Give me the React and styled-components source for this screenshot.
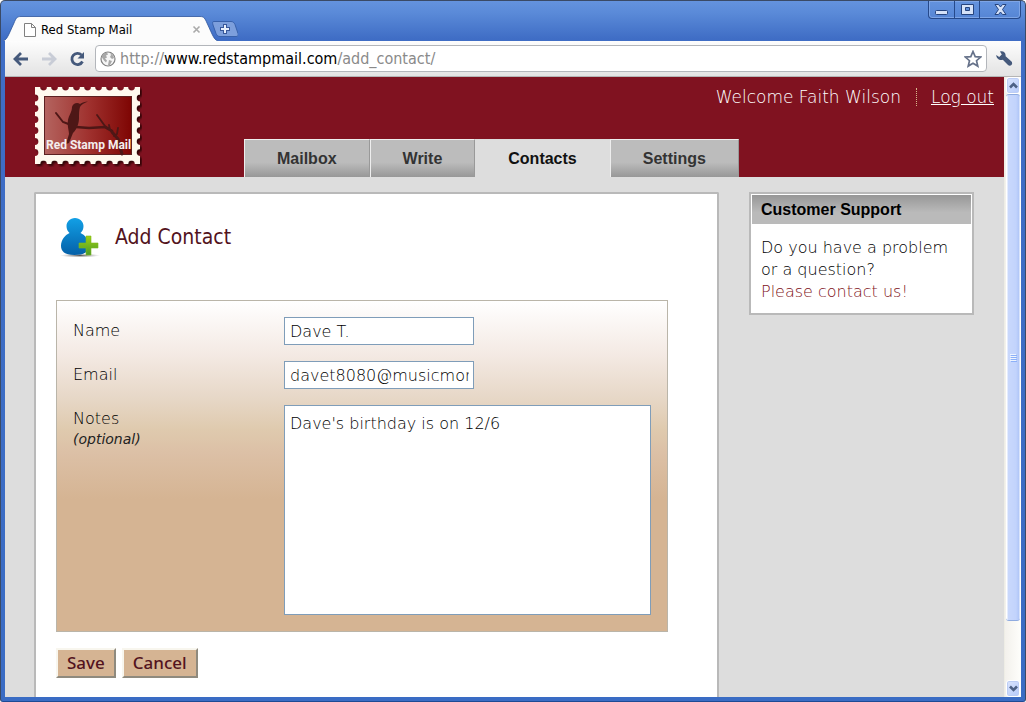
import React from "react";
import styled, { createGlobalStyle } from "styled-components";

const sans = `"DejaVu Sans", Verdana, sans-serif`;
const narrow = `"DejaVu Sans Condensed", Tahoma, sans-serif`;
const arial = `"Liberation Sans", Arial, sans-serif`;

const GlobalStyle = createGlobalStyle`
  *, *::before, *::after { box-sizing: border-box; }
  body { margin: 0; font: 200 16px/22px ${sans}; color: #000; }
  h1, h2, p { margin: 0; font-weight: inherit; }
  button { padding: 0; border: 0; background: none; font: inherit; color: inherit; }
`;

const Window = styled.div`
  height: 100vh;
  display: flex;
  flex-direction: column;
  overflow: hidden;
  padding: 0 4px 4px;
  border: 1px solid #3a4a66;
  border-bottom-color: #1d4a94;
  border-radius: 5px 5px 3px 3px;
  background: linear-gradient(#6493de 0, #5a8ad8 12px, #3f6dc5 38px, #3a6cc4 100%);
`;

const TitleBar = styled.div`
  flex: none;
  display: flex;
  align-items: flex-end;
  height: 40px;
`;

const TabShape = styled.div`
  position: relative;
  display: flex;
  align-items: center;
  gap: 4px;
  width: 213px;
  height: 25px;
  padding: 2px 17px 0 18px;
  font: 13px/16px ${narrow};
`;

const TabBack = styled.svg`
  position: absolute;
  left: -2px;
  top: 0;
`;

const TabTitle = styled.span`
  position: relative;
  flex: 1;
`;

const TabIcon = styled.svg`
  position: relative;
  flex: none;
`;

const IconButton = styled.button`
  position: relative;
  flex: none;
  display: flex;
  align-items: center;
  justify-content: center;
  width: ${(p) => p.$w || 16}px;
  height: ${(p) => p.$h || 16}px;
`;

const NewTab = styled(IconButton)`
  margin: 0 0 4px -6px;
`;

const WindowButtons = styled.div`
  display: flex;
  align-self: flex-start;
  margin-left: auto;
  border: 1px solid #26498a;
  border-top: 0;
  border-radius: 0 0 4px 4px;
  box-shadow: inset 0 0 0 1px #7ea5e6;
`;

const WindowButton = styled(IconButton)`
  & + & { border-left: 1px solid #26498a; }
`;

const Toolbar = styled.div`
  flex: none;
  display: flex;
  align-items: center;
  gap: 8px;
  height: 36px;
  padding: 0 8px;
  border-bottom: 1px solid #b5b5b5;
  background: linear-gradient(#fdfdfd, #e3e3e3);
`;

const NavButtons = styled.div`
  display: flex;
  gap: 12px;
  padding-right: 2px;
`;

const AddressBar = styled.div`
  flex: 1;
  display: flex;
  align-items: center;
  gap: 4px;
  height: 27px;
  padding: 0 4px;
  border: 1px solid #b3b6bb;
  border-radius: 4px;
  background: #fff;
  font: 16px/20px ${narrow};
  color: #8a8a8a;
`;

const Url = styled.span`
  flex: 1;
  b { font-weight: 400; color: #000; }
`;

const Viewport = styled.div`
  flex: 1;
  min-height: 0;
  display: flex;
`;

const Page = styled.div`
  flex: 1;
  min-width: 0;
  display: flex;
  flex-direction: column;
  overflow: hidden;
  background: #ddd;
`;

const Header = styled.header`
  flex: none;
  display: flex;
  gap: 102px;
  height: 100px;
  padding: 9px 10px 0 29px;
  background: #801220;
`;

const HeaderRight = styled.div`
  flex: 1;
  display: flex;
  flex-direction: column;
  justify-content: space-between;
`;

const UserBar = styled.div`
  align-self: flex-end;
  display: flex;
  align-items: center;
  color: #fff;
  font-size: 17px;
  a { color: #fff; padding-left: 14px; }
  span { padding-right: 15px; border-right: 1px dotted #d8b98c; line-height: 18px; }
`;

const Nav = styled.nav`
  display: flex;
`;

const NavTab = styled.a`
  height: 38px;
  padding: 0 32px;
  border: 1px solid ${(p) => (p.$active ? "#ddd" : "#eee")};
  border-right-color: ${(p) => (p.$active ? "#ddd" : "#999")};
  border-bottom: 0;
  background: ${(p) => (p.$active ? "#ddd" : "linear-gradient(#bcbcbc 60%, #979797)")};
  color: ${(p) => (p.$active ? "#111" : "#333")};
  font: bold 16px/37px ${arial};
  text-decoration: none;
`;

const Columns = styled.div`
  flex: 1;
  min-height: 0;
  display: flex;
  gap: 30px;
  padding: 15px 30px 0 29px;
`;

const Main = styled.main`
  flex: 1;
  min-width: 0;
  padding: 20px 49px 18px 20px;
  border: 2px solid #b9b9b9;
  border-bottom: 0;
  border-radius: 2px 2px 0 0;
  background: #fff;
`;

const Heading = styled.div`
  display: flex;
  align-items: center;
  gap: 14px;
  height: 46px;
  margin-bottom: 40px;
  padding-left: 4px;
  h1 { font: 21px/28px ${narrow}; color: #531320; }
`;

const Panel = styled.div`
  display: grid;
  grid-template-columns: 211px 1fr;
  row-gap: 16px;
  padding: 16px;
  border: 1px solid #bab5a9;
  background: linear-gradient(#fff 0, #f4eae4 16%, #e7d8c8 29%, #dfcaae 39%, #dcc0a6 46%, #d5b493 60%);
`;

const Label = styled.label`
  padding-top: 3px;
  small { display: block; font-size: 14px; line-height: 18px; font-style: italic; color: #222; }
`;

const Field = styled.input`
  width: 190px;
  height: 28px;
  padding: 0 4px 0 5px;
  border: 1px solid #7f9db9;
  background: #fff;
  color: #000;
  font: 200 16px/22px ${sans};
`;

const Notes = styled.textarea`
  display: block;
  width: 100%;
  height: 210px;
  padding: 7px 5px;
  border: 1px solid #7f9db9;
  background: #fff;
  color: #000;
  font: 200 16px/22px ${sans};
  resize: none;
`;

const Actions = styled.div`
  display: flex;
  gap: 6px;
  margin-top: 16px;
`;

const ActionButton = styled.button`
  height: 30px;
  padding: 0 9px;
  border: 2px solid;
  border-color: #f8f6ee #8f8a7e #8f8a7e #f8f6ee;
  background: #d5b493;
  color: #531320;
  font: 500 17px/26px "Noto Sans", sans-serif;
`;

const Support = styled.aside`
  flex: none;
  align-self: flex-start;
  width: 225px;
  padding: 1px;
  border: 2px solid #b9b9b9;
  background: #fff;
  h2 {
    padding: 0 9px;
    background: linear-gradient(#979797, #bababa 60%);
    font: bold 16px/29px ${arial};
  }
  p { padding: 13px 9px 9px; }
  a { display: block; color: #801220; text-decoration: none; }
`;

const ScrollBar = styled.div`
  flex: none;
  display: flex;
  flex-direction: column;
  width: 17px;
  padding: 0 1px;
  border-left: 1px solid #eeede5;
  background: linear-gradient(90deg, #f3f1ec, #fefefb);
`;

const ScrollButton = styled.button`
  flex: none;
  display: flex;
  align-items: center;
  justify-content: center;
  height: 17px;
  border: 1px solid #fff;
  border-radius: 3px;
  background: linear-gradient(135deg, #dbe5fd, #b5cafa);
  box-shadow: inset 0 0 0 1px #bccdf5;
`;

const Thumb = styled.div`
  flex: 527;
  display: flex;
  align-items: center;
  justify-content: center;
  border: 1px solid #8fabe0;
  border-width: 1px 0;
  border-radius: 3px;
  background: linear-gradient(90deg, #fff 1px, #c9d8fc 2px, #c2d3fc 10px, #b0c6f7 13px, #fff 14px);
`;

const Track = styled.div`
  flex: 59;
`;

const Chevron = ({ down }) => (
  <svg width="9" height="7" viewBox="0 0 9 7">
    <path d={down ? "M1 1.5l3.5 3.5L8 1.5" : "M1 5.5L4.5 2 8 5.5"} fill="none" stroke="#4d6185" strokeWidth="2.6" />
  </svg>
);

const holesX = [9.5, 20.5, 31.5, 42.5, 53.5, 64.5, 75.5, 86.5, 97.5];
const holesY = [12, 22.5, 33.5, 44.5, 55.5, 66.5];

const Stamp = () => (
  <svg width="108" height="81" viewBox="0 0 108 81" role="img" aria-label="Red Stamp Mail">
    <defs>
      <linearGradient id="stampRed">
        <stop offset="0" stopColor="#b4645f" />
        <stop offset=".5" stopColor="#a0322f" />
        <stop offset="1" stopColor="#7e0503" />
      </linearGradient>
      <filter id="stampShadow" x="-10%" y="-10%" width="120%" height="125%">
        <feDropShadow dx="2" dy="2" stdDeviation="1" floodColor="#200" floodOpacity=".85" />
      </filter>
      <mask id="perforation">
        <rect x="1" y="1" width="105" height="78" fill="#fff" />
        {holesX.map((x) => (
          <React.Fragment key={x}>
            <circle cx={x} cy="1" r="3.4" />
            <circle cx={x} cy="78" r="3.4" />
          </React.Fragment>
        ))}
        {holesY.map((y) => (
          <React.Fragment key={y}>
            <circle cx="1" cy={y} r="3.4" />
            <circle cx="106" cy={y} r="3.4" />
          </React.Fragment>
        ))}
      </mask>
    </defs>
    <g filter="url(#stampShadow)">
      <rect x="1" y="1" width="105" height="77" fill="#fff9ee" mask="url(#perforation)" />
    </g>
    <rect x="10.5" y="10.5" width="87" height="58" fill="url(#stampRed)" stroke="#5c2020" />
    <g fill="none" stroke="#4e1716" strokeLinecap="round">
      <path d="M22 27l7 9 8 3 4 3" strokeWidth="2" />
      <path d="M42 41l13 1 16-1 7 4" strokeWidth="2.6" />
      <path d="M63 29l8 11 7 5M75 39l1 5M84 42l-1 6-3 2" strokeWidth="1.8" />
      <path d="M78 46l6 7 4 15" strokeWidth="3" />
    </g>
    <path d="M54 15.500c-3 .2-6 1-8 2.500-3-2-7-.5-8 3 0 5-3 8-4 13-1 6 1 10 1 14l-3 10 3-1 4-10c4-4 6-10 6-15 0-4 0-8 1-11 1-2 4-4 8-5.500z" fill="#4e1716" />
    <text x="12" y="63" fill="#f5eeee" fontFamily="Roboto, sans-serif" fontWeight="700" fontSize="12">Red Stamp Mail</text>
  </svg>
);

const Person = () => (
  <svg width="41" height="42" viewBox="0 0 41 42" aria-hidden="true">
    <defs>
      <linearGradient id="personBlue" x2="0" y2="1">
        <stop offset="0" stopColor="#12a0e6" />
        <stop offset="1" stopColor="#0460a8" />
      </linearGradient>
      <linearGradient id="plusGreen" x2="0" y2="1">
        <stop offset="0" stopColor="#a0d010" />
        <stop offset="1" stopColor="#4a9a2a" />
      </linearGradient>
      <radialGradient id="groundShade">
        <stop offset="0" stopColor="#555" />
        <stop offset="1" stopColor="#999" stopOpacity="0" />
      </radialGradient>
    </defs>
    <ellipse cx="20" cy="39.5" rx="20" ry="2" fill="url(#groundShade)" />
    <path d="M15 2c5 0 8.500 4 8.500 8 0 3-1 5-3 7 5 2 8 7 8 13 0 6-4 9-14 9S1 35 1 30c0-6 4-11 8.500-13-2-2-3-4-3-7 0-4 3.500-8 8.500-8z" fill="url(#personBlue)" />
    <path d="M26 20h5v7h7v5h-7v7h-5v-7h-7v-5h7z" fill="url(#plusGreen)" stroke="#7cba20" strokeWidth=".6" />
  </svg>
);

export default function App() {
  return (
    <>
      <GlobalStyle />
      <Window>
        <TitleBar>
          <TabShape>
            <TabBack width="219" height="25" viewBox="0 0 219 25" aria-hidden="true">
              <path d="M0 25c3-1 4-3 6-7l5-11c2-5 3-6.500 7-6.500h179c4 0 5 2 7 6.500l5 11c2 4 3 6 6 7z" fill="#fcfcfc" />
              <path d="M0 25c3-1 4-3 6-7l5-11c2-5 3-6.500 7-6.500h179c4 0 5 2 7 6.500l5 11c2 4 3 6 6 7" fill="none" stroke="#2f559c" strokeWidth=".8" />
            </TabBack>
            <TabIcon width="14" height="16" viewBox="0 0 14 16" aria-hidden="true">
              <path d="M1.500 1.500h7l4 4v9h-11zM8.500 1.500v4h4" fill="#fff" stroke="#808080" />
            </TabIcon>
            <TabTitle>Red Stamp Mail</TabTitle>
            <IconButton aria-label="Close tab" $w={9}>
              <svg width="9" height="9" viewBox="0 0 9 9"><path d="M1.500 1.500l6 6M7.500 1.500l-6 6" stroke="#aaa" strokeWidth="1.6" /></svg>
            </IconButton>
          </TabShape>
          <NewTab aria-label="New tab" $w={26} $h={16}>
            <svg width="26" height="16" viewBox="0 0 26 16">
              <path d="M2 .5h17c2 0 3 1 4 3l3 9c.5 2 0 3-2 3H8c-2 0-3-1-4-3L1 4C.5 2 0 .5 2 .5z" fill="#7d9fdc" stroke="#3861ab" />
              <path d="M13 3v10M8 8h10" stroke="#38589a" strokeWidth="4" />
              <path d="M13 4v8M9 8h8" stroke="#e8effb" strokeWidth="2" />
            </svg>
          </NewTab>
          <WindowButtons>
            <WindowButton aria-label="Minimize" $w={25} $h={17}>
              <svg width="13" height="13" viewBox="0 0 13 13"><rect x=".5" y="7.5" width="12" height="4" rx="1" fill="#d5e2f8" stroke="#26447e" /></svg>
            </WindowButton>
            <WindowButton aria-label="Maximize" $w={25} $h={17}>
              <svg width="13" height="11" viewBox="0 0 13 11"><path d="M.5.5h12v10H.5zM4.500 3.500h4v3h-4z" fill="#d5e2f8" stroke="#26447e" fillRule="evenodd" /></svg>
            </WindowButton>
            <WindowButton aria-label="Close" $w={41} $h={17}>
              <svg width="13" height="11" viewBox="0 0 13 11"><path d="M1 .5h3.500l2 2.500 2-2.500H12L8.500 5.500 12 10.500H8.500l-2-2.500-2 2.500H1l3.500-5z" fill="#d5e2f8" stroke="#26447e" /></svg>
            </WindowButton>
          </WindowButtons>
        </TitleBar>

        <Toolbar>
          <NavButtons>
            <IconButton aria-label="Back">
              <svg width="16" height="14" viewBox="0 0 16 14"><path d="M8 1L2 7l6 6M2.500 7H15" fill="none" stroke="#45597b" strokeWidth="2.8" /></svg>
            </IconButton>
            <IconButton aria-label="Forward">
              <svg width="16" height="14" viewBox="0 0 16 14"><path d="M8 1l6 6-6 6M13.500 7H1" fill="none" stroke="#c8ccd6" strokeWidth="2.8" /></svg>
            </IconButton>
            <IconButton aria-label="Reload">
              <svg width="16" height="16" viewBox="0 0 16 16">
                <path d="M12.500 4A5.600 5.600 0 1 0 13.500 10.500" fill="none" stroke="#45597b" strokeWidth="2.8" />
                <path d="M15 1v6.500H8.500z" fill="#45597b" />
              </svg>
            </IconButton>
          </NavButtons>
          <AddressBar>
            <svg width="16" height="16" viewBox="0 0 16 16" aria-hidden="true">
              <circle cx="8" cy="8" r="7" fill="#f6f6f6" stroke="#808080" strokeWidth="1.2" />
              <path d="M2 5c1-2 3-3.500 5-3.500l1 2-2 1 1 2-2 1 2 2-1 2-2-2-2-3zM10 2c2 1 4 3 4 5l-2 1-2-2 1-2zM9 9l3 1-2 4-2 0z" fill="#a8a8a8" />
            </svg>
            <Url>http://<b>www.redstampmail.com</b>/add_contact/</Url>
            <IconButton aria-label="Bookmark this page" $w={18} $h={18}>
              <svg width="18" height="18" viewBox="0 0 18 18"><path d="M9 1.500l2.200 5.100 5.500.5-4.200 3.600 1.300 5.400L9 13.200l-4.800 2.900 1.300-5.400L1.300 7.100l5.500-.5z" fill="#fff" stroke="#66728a" strokeWidth="1.7" /></svg>
            </IconButton>
          </AddressBar>
          <IconButton aria-label="Customize" $w={18} $h={18}>
            <svg width="18" height="18" viewBox="0 0 18 18"><path d="M5 1.500C8.500.5 11 3 10.600 6.200l5.900 5.300c2 2.500-1 5.500-3.500 3.500L7.800 9.800C4.500 10.800 1.300 8.500 1.200 5l3 2 2.600-2.400z" fill="#45597b" /></svg>
          </IconButton>
        </Toolbar>

        <Viewport>
          <Page>
            <Header>
              <Stamp />
              <HeaderRight>
                <UserBar>
                  <span>Welcome Faith Wilson</span>
                  <a href="#logout">Log out</a>
                </UserBar>
                <Nav>
                  <NavTab href="#mailbox">Mailbox</NavTab>
                  <NavTab href="#write">Write</NavTab>
                  <NavTab href="#contacts" $active>Contacts</NavTab>
                  <NavTab href="#settings">Settings</NavTab>
                </Nav>
              </HeaderRight>
            </Header>
            <Columns>
              <Main>
                <Heading>
                  <Person />
                  <h1>Add Contact</h1>
                </Heading>
                <Panel>
                  <Label htmlFor="name">Name</Label>
                  <Field id="name" defaultValue="Dave T." />
                  <Label htmlFor="email">Email</Label>
                  <Field id="email" defaultValue="davet8080@musicmore.com" />
                  <Label htmlFor="notes">Notes<small>(optional)</small></Label>
                  <Notes id="notes" defaultValue="Dave's birthday is on 12/6" />
                </Panel>
                <Actions>
                  <ActionButton type="button">Save</ActionButton>
                  <ActionButton type="button">Cancel</ActionButton>
                </Actions>
              </Main>
              <Support>
                <h2>Customer Support</h2>
                <p>Do you have a problem or a question? <a href="#contact">Please contact us!</a></p>
              </Support>
            </Columns>
          </Page>
          <ScrollBar>
            <ScrollButton aria-label="Scroll up"><Chevron /></ScrollButton>
            <Thumb>
              <svg width="7" height="8" viewBox="0 0 7 8"><path d="M0 .5h6M0 2.500h6M0 4.500h6M0 6.500h6" stroke="#eef4fe" /><path d="M1 1.500h6M1 3.500h6M1 5.500h6M1 7.500h6" stroke="#8cb0f8" /></svg>
            </Thumb>
            <Track />
            <ScrollButton aria-label="Scroll down"><Chevron down /></ScrollButton>
          </ScrollBar>
        </Viewport>
      </Window>
    </>
  );
}
